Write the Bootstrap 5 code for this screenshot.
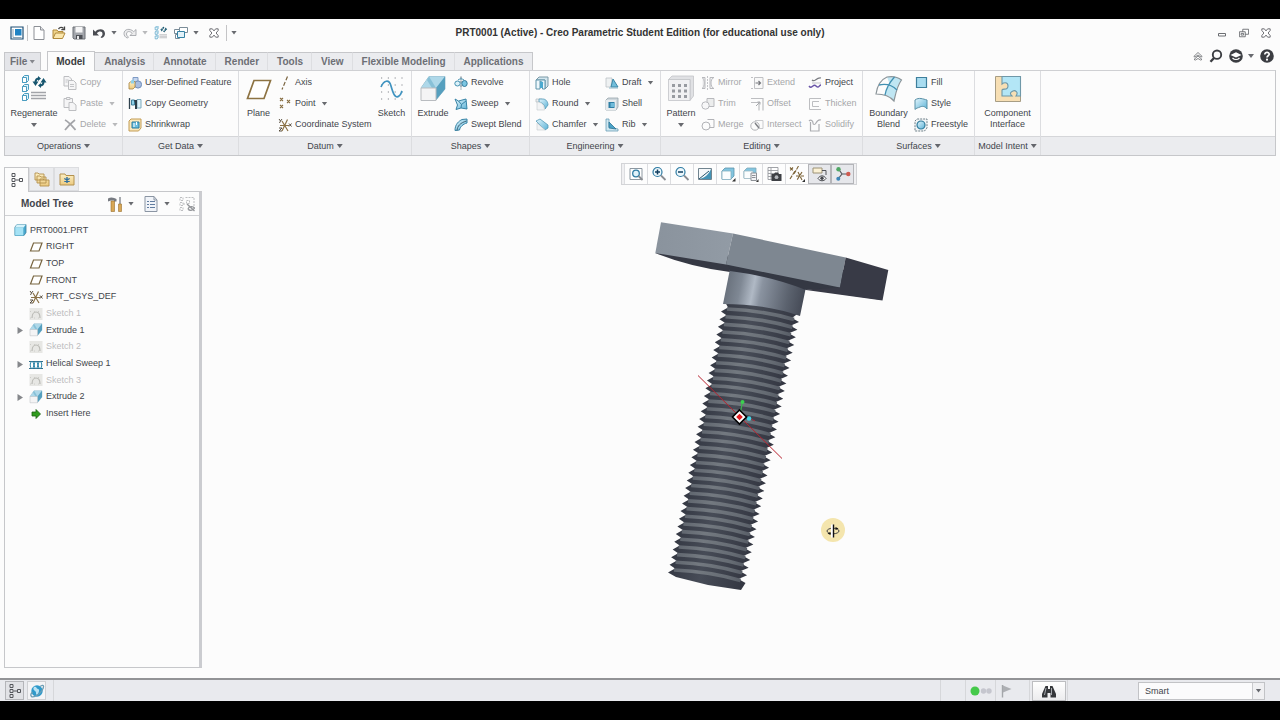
<!DOCTYPE html>
<html lang="en">
<head>
<meta charset="utf-8">
<meta name="viewport" content="width=device-width, initial-scale=1">
<title>PRT0001 (Active) - Creo Parametric Student Edition</title>
<link href="https://cdn.jsdelivr.net/npm/bootstrap@5.3.0/dist/css/bootstrap.min.css" rel="stylesheet">
<style>
  :root { --ink:#42454b; --dim:#a6a7aa; --line:#c6c7ca; --bar:#ebecef; --paper:#fcfcfc; }
  body { font:9px/11px "Liberation Sans", Arial, sans-serif; color:var(--ink); background:#000; padding:19px 0; height:100vh; }
  .app { background:var(--paper); overflow:hidden; }
  svg { display:block; flex:none; }
  .btn { --bs-btn-padding-x:0; --bs-btn-padding-y:0; --bs-btn-border-width:0; --bs-btn-border-radius:0; --bs-btn-color:var(--ink); --bs-btn-disabled-color:var(--dim); --bs-btn-disabled-opacity:1;
         --bs-btn-font-size:9px; --bs-btn-line-height:11px; display:flex; align-items:center; justify-content:center; white-space:nowrap; flex:none; }
  .caret { flex:none; width:6px; height:4px; background:currentColor; clip-path:polygon(0 0,100% 0,50% 100%); opacity:.8; }
  .drop-btn { gap:5px; }
  .i10 { width:10px; height:10px; } .i14 { width:14px; height:14px; } .i16 { width:16px; height:16px; } .i28 { width:28px; height:28px; }

  .titlebar { display:grid; grid-template-columns:1fr auto 1fr; align-items:center; height:27px; }
  .titlebar h1 { font-size:10px; line-height:12px; font-weight:700; margin:0; color:#333; }
  .quick { gap:6px; padding-left:10px; }
  .rule { width:1px; height:16px; margin:0 -2px 0 -3px; background:#c4c4c6; }
  .winctl { gap:12px; padding-right:9px; }

  .tabrow { height:24px; padding:0 6px 0 4px; }
  .tabrow .nav-link { font-size:10px; line-height:12px; font-weight:700; color:#6d6f75; padding:0 8px 0 9px; height:18px; border:0; border-top:1px solid var(--line); border-right:1px solid #dddee1; border-radius:0; background:var(--bar); }
  .tabrow .file { border:1px solid var(--line); border-bottom:0; background:#e4e5e9; padding:0 5px; margin-right:6px; display:flex; align-items:center; gap:2px; }
  .tabrow .nav-link.active { height:20px; margin-bottom:-1px; background:var(--paper); border:1px solid var(--line); border-bottom:0; color:#3a3c40; padding:0 9px 0 8px; position:relative; }
  .tabrow .nav-item:last-child .nav-link { border-right-color:var(--line); }
  .corner { gap:6px; }

  .ribbon { margin:0 4px; border:1px solid var(--line); border-top-color:#cfd0d3; height:86px; }
  .group { display:flex; flex-direction:column; border-right:1px solid #dcdde0; flex:none; }
  .group-body { display:grid; height:65px; padding-top:1px; }
  .group-name { height:19px; background:var(--bar); border-top:1px solid #d5d6d9; gap:3px; width:100%; }
  .spare { flex:1; }
  .g-ops { width:118px; } .g-ops .group-body { grid-template-columns:58px 1fr; }
  .g-get { width:116px; } .g-get .group-body { padding-left:5px; }
  .g-dat { width:173px; } .g-dat .group-body { grid-template-columns:39px 94px 1fr; }
  .g-sha { width:118px; } .g-sha .group-body { grid-template-columns:42px 1fr; }
  .g-eng { width:131px; } .g-eng .group-body { grid-template-columns:70px 1fr; padding-left:5px; }
  .g-edi { width:202px; } .g-edi .group-body { grid-template-columns:40px 49px 58px 1fr; }
  .g-sur { width:112px; } .g-sur .group-body { grid-template-columns:51px 1fr; }
  .g-mod { width:66px; }
  .cmd { height:21px; gap:3px; justify-content:flex-start; }
  .cmd .caret { margin-left:3px; }
  .big { flex-direction:column; justify-content:flex-start; padding-top:3px; white-space:normal; height:64px; }
  .big svg { margin-bottom:5px; }
  .big .caret { margin-top:4px; }

  .side { width:198px; margin:11px 0 10px 4px; flex:none; }
  .side-tabs .btn { width:25px; height:24px; background:var(--bar); border:1px solid #dcdde0; }
  .side-tabs .btn.active { height:25px; margin-bottom:-1px; background:var(--paper); border:1px solid var(--line); border-bottom:0; position:relative; }
  .panel { border:1px solid var(--line); border-right:3px solid #cbccd0; }
  .panel-head { height:24px; border-bottom:1px solid #d0d1d4; padding:0 4px 0 16px; }
  .panel-head h2 { font-size:10px; line-height:12px; font-weight:700; margin:0; }
  .panel-tools { gap:9px; }
  .tree { display:grid; grid-auto-rows:1fr; height:200px; margin:6px 0 0; padding:0 0 0 8px; list-style:none; }
  .tree li { display:flex; align-items:center; gap:3px; }
  .tree li.leaf { padding-left:16px; }
  .tree li.node { padding-left:3px; }
  .tree li.node .btn { width:8px; height:8px; margin-right:2px; }
  .tree li.off { color:#bdbdbf; }

  .viewbar { margin:7px 4px 0 0; height:22px; border:1px solid #d3d4d7; padding:0 2px; background:#f0f0f2; }
  .viewbar .btn { width:23px; height:20px; background:#fdfdfd; border-left:1px solid #dcdde0; }
  .viewbar .btn.active { background:#e6e7eb; border:1px solid #b4b5b9; }
  .work, .scene { min-height:0; }
  .scene svg { width:100%; height:100%; }

  .status { height:23px; background:#e9eaee; border-top:2px solid #929396; padding:0 15px 0 5px; overflow:hidden; flex:none; }
  .status > .cell { height:23px; border-right:1px solid #d6d7da; display:flex; align-items:center; flex:none; }
  .c-toggles { padding-right:7px; gap:3px; } .c-blank { width:25px; } .c-lamp { width:30px; } .c-flag { width:34px; } .c-find { width:38px; } .c-gap { width:70px; }
  .status .tog { width:19px; height:19px; border:1px solid #cfd0d3; background:#f4f4f6; }
  .status .tog.active { background:#e1e2e6; border-color:#b4b5b9; }
  .find { width:34px; height:20px; background:linear-gradient(#fff,#ececee); border:1px solid #bdbec1; }
  .filter { width:127px; height:18px; position:relative; }
  .filter select { appearance:none; width:100%; height:18px; border:1px solid #c2c3c6; background:#fbfbfc; border-radius:0; font:inherit; color:var(--ink); padding:1px 16px 0 6px; display:block; }
  .filter .drop { position:absolute; inset:1px 1px 1px auto; width:12px; border-left:1px solid #c9cacd; background:#f0f0f2; display:flex; align-items:center; justify-content:center; pointer-events:none; }
</style>
</head>
<body class="d-flex flex-column">

<svg width="0" height="0" class="position-absolute" aria-hidden="true">
  <defs>
    <linearGradient id="gBlue" x1="0" y1="0" x2="1" y2="1"><stop offset="0" stop-color="#e4f6fd"/><stop offset="1" stop-color="#5bb2d6"/></linearGradient>
    <linearGradient id="gGold" x1="0" y1="0" x2="0" y2="1"><stop offset="0" stop-color="#fdf0c4"/><stop offset="1" stop-color="#ecca80"/></linearGradient>
  </defs>
  <symbol id="app" viewBox="0 0 14 14"><path d="M1 1h12v12H1z" fill="#fff" stroke="#1f4f74" stroke-width="1.2"/><path d="M5 3h6.500v6.500H5z" fill="#1f83c4"/><path d="M3 3v8.500h8.500" fill="none" stroke="#8fa6b5"/></symbol>
  <symbol id="new" viewBox="0 0 14 14"><path d="M2 .5h6.500L12 4v9.500H2z" fill="#fff" stroke="#8d9096"/><path d="M8.500.5V4H12" fill="#e3e4e8" stroke="#8d9096"/></symbol>
  <symbol id="open" viewBox="0 0 14 14"><path d="M1 12V4h4l1 1.500h5V7" fill="#f0d48a" stroke="#b08a3c"/><path d="M1 12.500 3.500 7H13l-2.500 5.500z" fill="#fbe7ad" stroke="#b08a3c"/><path d="M6.500 3C8 1 10 1 11.500 2.500M12.500.5v3.200H9.300" fill="none" stroke="#444" stroke-width="1.300"/></symbol>
  <symbol id="save" viewBox="0 0 14 14"><path d="M1 1h12v12H2l-1-1z" fill="#a3a6ac" stroke="#6d7077"/><path d="M3.500 1h7v5.500h-7z" fill="#f6f6f7"/><path d="M4 9h6.500v4H4z" fill="#4d5056"/><path d="M5 10h2v3H5z" fill="#e8e8ea"/></symbol>
  <symbol id="undo" viewBox="0 0 14 14"><path d="M1 3.500v6h6L4.800 7.300C7 4.800 10.500 5 10.500 8c0 1.500-1 2.500-2 3.200l1.300.8C12 11 13 9.500 13 7.500 13 3 7 1.800 3.300 5.700z" fill="#4a4c52"/></symbol>
  <symbol id="redo" viewBox="0 0 14 14"><path d="M13 3.500v6H7l2.200-2.200C7 4.800 3.500 5 3.500 8c0 1.500 1 2.500 2 3.200l-1.300.8C2 11 1 9.500 1 7.500 1 3 7 1.800 10.700 5.700z" fill="#ededee" stroke="#9c9ea3" stroke-width=".8"/></symbol>
  <symbol id="regen" viewBox="0 0 28 28"><g stroke="#4b9dc0" fill="#dff3fa"><path d="M2.500 2.500 4.500.5h4v5l-2 2h-4zM2.500 11.500l2-2h4v5l-2 2h-4zM2.500 20.500l2-2h4v5l-2 2h-4z"/><path d="M2.500 2.500h4v5h-4zM2.500 11.500h4v5h-4zM2.500 20.500h4v5h-4z" fill="#fff"/></g><path d="M11 17.500h15M11 20.500h15M11 23.500h15" stroke="#a2a4a9" stroke-width="1.300"/><path d="M15.500 7.500C15.500 4.500 16.500 3.500 19 3.500M23.500 6.500c0 3-1 4-3.500 4" fill="none" stroke="#17566f" stroke-width="2"/><path d="M12.500 6.500h6l-3 4.500zM26.500 7.500h-6l3-4.500zM18 1v5l3-2.500zM21 8v5l-3-2.500z" fill="#17566f"/></symbol>
  <symbol id="wins" viewBox="0 0 14 14"><path d="M5.500 1.500h8v5h-8z" fill="#fff" stroke="#7a8c98"/><path d="M.5 3.500h5v4h-5zM1.500 8.500h4v4h-4z" fill="#fff" stroke="#7a8c98"/><path d="M3.500 5.500h7v6h-7z" fill="#e2f2f9" stroke="#3482a4"/></symbol>
  <symbol id="xbox" viewBox="0 0 12 12"><path d="M1 1h3l2 2.500L8 1h3v2L8.500 6 11 9v2H8L6 8.500 4 11H1V9l2.500-3L1 3z" fill="#fff" stroke="#54565b"/></symbol>
  <symbol id="min" viewBox="0 0 10 10"><path d="M1.500 5.500h7v2.500h-7z" fill="#fff" stroke="#6c6e72"/></symbol>
  <symbol id="rest" viewBox="0 0 12 12"><path d="M4.500 1.500h7v6h-7z" fill="#fff" stroke="#5f6166"/><path d="M.5 4.500h7v6h-7z" fill="#fff" stroke="#5f6166"/><path d="M2.500 6.500h3v2h-3z" fill="none" stroke="#5f6166"/></symbol>
  <symbol id="chev" viewBox="0 0 10 10"><path d="M.8 5.500 5 1.500l4.200 4L8 6 5 4 2 6zM1 8.500l4-3.500 4 3.500-1.500.5L5 7.500 2.500 9z" fill="#fff" stroke="#66686c" stroke-width=".8"/></symbol>
  <symbol id="search" viewBox="0 0 14 14"><circle cx="8" cy="5.700" r="4.200" fill="none" stroke="#3b3d42" stroke-width="1.900"/><path d="M5 9 1.500 12.700" stroke="#3b3d42" stroke-width="2.400"/></symbol>
  <symbol id="cap" viewBox="0 0 14 14"><circle cx="7" cy="7" r="6.800" fill="#3b3d42"/><path d="M1.500 6 7 3.300 12.500 6 7 8.500z" fill="#fff"/><path d="M3.500 9c2 2 5 2 7 0" fill="none" stroke="#fff" stroke-width="1.200"/></symbol>
  <symbol id="help" viewBox="0 0 14 14"><circle cx="7" cy="7" r="6.800" fill="#3b3d42"/><path d="M4.800 5.400C4.800 2.500 9.300 2.700 9.200 5.300 9.100 6.800 7 6.800 7 8.600" fill="none" stroke="#fff" stroke-width="1.700"/><circle cx="7" cy="10.700" r="1.100" fill="#fff"/></symbol>
  <symbol id="copy" viewBox="0 0 14 14"><g fill="#f5f5f6" stroke="#bdbec1"><path d="M1 .5h5L8.500 3v7H1z"/><path d="M5.500 4.500h5L13 7v6.500H5.500z"/></g><path d="M2.500 4h3M2.500 6h2M7 8.500h4M7 10.500h4" stroke="#c4c5c8"/></symbol>
  <symbol id="paste" viewBox="0 0 14 14"><g fill="#f5f5f6" stroke="#bdbec1"><path d="M1 1.500h8.500v9H1z"/><path d="M3.500.5h3.500v2H3.500z"/><path d="M6 5.500h4L13 8v5.500H6z"/></g></symbol>
  <symbol id="del" viewBox="0 0 14 14"><path d="M2 2c4 2 7 6 10.500 10M12 2C8 5 5 8 2 12" fill="none" stroke="#a3a4a8" stroke-width="1.700"/></symbol>
  <symbol id="udf" viewBox="0 0 14 14"><path d="M5 1.500h5v5H5z" fill="#c5d5ee" stroke="#7e9ac4"/><circle cx="10" cy="8.500" r="3.600" fill="#a7bde0" stroke="#6f8cb8"/><path d="M1 7l2-1.500h4V11L5 13H1z" fill="url(#gGold)" stroke="#a78443" stroke-width=".8"/><path d="M3 4.500 6 3.500v4H3z" fill="#8fd0e8"/></symbol>
  <symbol id="cgeo" viewBox="0 0 14 14"><path d="M1.500 1v11" stroke="#30424e" stroke-width="1.300"/><path d="M3.500 3h3v5h-3z" fill="#8fd0e8" stroke="#3f809c"/><path d="M9 2.500h4V11H9z" fill="#dff2f9" stroke="#7caabd"/><path d="M6 3h3v9H7V6z" fill="#2d3d49"/></symbol>
  <symbol id="shrink" viewBox="0 0 14 14"><path d="M1 3l2-2h10v9l-2.500 3H1z" fill="#f9e8bd" stroke="#c39c54"/><path d="M4 4h7v6H4z" fill="#6bbfe0" stroke="#2c7c9f"/><path d="M6 5v4M8.500 4v3" stroke="#fff"/></symbol>
  <symbol id="plane" viewBox="0 0 28 28"><path d="M9 5.500h16.500L19 23.500H2.500z" fill="#fff" stroke="#8d7343" stroke-width="1.700"/></symbol>
  <symbol id="axis" viewBox="0 0 14 14"><path d="M9.500.5 4 13.500" stroke="#7a6440" stroke-width="1.200" stroke-dasharray="4 2"/></symbol>
  <symbol id="pnt" viewBox="0 0 14 14"><path d="m2 1 3 3m0-3L2 4m7-1 3 3m0-3L9 6M2 8l3 3m0-3-3 3" stroke="#8a7146" stroke-width="1.100"/></symbol>
  <symbol id="csys" viewBox="0 0 14 14"><path d="m1 1 1.500 2L4 1M2.500 3 1.500 5M1 10h3l-3 3h3M11 5.500l2.500 3m0-3-2.500 3" fill="none" stroke="#4b4030" stroke-width=".9"/><path d="M2 7.500h9M4 3l6 10M9.500 1.500 4 13" stroke="#8a7146" stroke-width="1.200"/></symbol>
  <symbol id="sketch" viewBox="0 0 28 28"><path d="M3 3h24M3 10h24M3 17h24M3 24h24" stroke="#85888e" stroke-dasharray="1.200 5.600"/><path d="M3 12C6 5 11 4 13 11s4 13 8 10c2-1 2-3 3-5" fill="none" stroke="#3f93c0" stroke-width="1.700"/></symbol>
  <symbol id="extr" viewBox="0 0 28 28"><path d="M2 13 10 1.500h16V14l-9 11z" fill="#9bcbe0" stroke="#7fa9bc" stroke-width=".7"/><path d="M10 1.500h16L17 13H2z" fill="#aed8e9"/><path d="M17 13 26 1.500V14l-9 11z" fill="#559fbe"/><path d="m10 1.500 7 11.500h-4l-5-8z" fill="#6db0cb" opacity=".6"/><path d="M2 13h15v12.500H2z" fill="#f4f4f5" stroke="#b9bcc0"/></symbol>
  <symbol id="revo" viewBox="0 0 14 14"><path d="M7 .5v13" stroke="#576f7c" stroke-dasharray="3 1"/><ellipse cx="3.500" cy="7.500" rx="2.700" ry="2.500" fill="#dcf1f9" stroke="#4391b1"/><ellipse cx="10.500" cy="7.500" rx="2.700" ry="3" fill="#7cc6e2" stroke="#33799a"/><path d="M4 4c2-1.500 4-1.500 6 0" fill="none" stroke="#4391b1"/></symbol>
  <symbol id="sweep" viewBox="0 0 14 14"><path d="M1 2 4.500 4 12 2l1 10-6-1-5 1.500L3.500 8z" fill="url(#gBlue)" stroke="#3884a6"/><path d="m4.500 4 3 3.500L7 11m.5-3.500L12 4" fill="none" stroke="#3884a6"/></symbol>
  <symbol id="swbl" viewBox="0 0 14 14"><path d="M1 12.500C1 6 5 3 8 1.500l5-.5v4C9 6 6 9 5.500 12z" fill="url(#gBlue)" stroke="#3884a6"/><path d="M3 12.500C3.500 8 6 5 12.500 3" fill="none" stroke="#3b6478"/></symbol>
  <symbol id="hole" viewBox="0 0 14 14"><path d="M1 4l3-3h9v9l-3 3V4z" fill="#d3e6ee" stroke="#7c9aa7"/><path d="M1 4h9v9H7.500V6.500L5 5v8H1z" fill="#edf7fb" stroke="#5f94aa"/><path d="M5 6c2-1.500 4 0 3 2v4H5z" fill="#4ba9cf"/></symbol>
  <symbol id="rnd" viewBox="0 0 14 14"><path d="M1 2h6l-3 3H1z" fill="#eceef0" stroke="#b2babf" stroke-width=".7"/><path d="M4 2h4c3 0 5 3 5 6l-3 4C10 8 8 6 4 5z" fill="url(#gBlue)" stroke="#559ab7" stroke-width=".8"/><path d="M2 5c5 0 7 3 7.500 8H2z" fill="#f3f4f5" stroke="#c4cacd" stroke-width=".6"/></symbol>
  <symbol id="cham" viewBox="0 0 14 14"><path d="M1 3 5 1l8 6v3l-3 2-7-7z" fill="url(#gBlue)" stroke="#559ab7" stroke-width=".8"/><path d="m2 5 8 7H2z" fill="#f1f3f4" stroke="#c4cacd" stroke-width=".6"/></symbol>
  <symbol id="draft" viewBox="0 0 14 14"><path d="M1 2h6l-1 9H1z" fill="#eef1f2" stroke="#bcc3c7" stroke-width=".8"/><path d="M6 11 8 3l5 8z" fill="#72bedb" stroke="#3a86a6"/><path d="M4 12h9" stroke="#8bb6c8"/></symbol>
  <symbol id="shell" viewBox="0 0 14 14"><path d="M1 3l2-2h10v9l-2 3H1z" fill="#cfd7dc" stroke="#98a5ac" stroke-width=".8"/><path d="M1 3h10v10H1z" fill="#e6ebee"/><path d="M3.500 5h6v6h-6z" fill="#2f7fa5"/><path d="M5.500 6h4v4h-4z" fill="#6fbbda"/></symbol>
  <symbol id="rib" viewBox="0 0 14 14"><path d="M1 1h3v8l9 2v2H1z" fill="#cfe7f0" stroke="#6ba0b6" stroke-width=".8"/><path d="m4 4 7 7-7-1z" fill="#4ba3c8" stroke="#2d7595" stroke-width=".8"/></symbol>
  <symbol id="patt" viewBox="0 0 28 28"><path d="M1.500 4.500 5 1h21.500v20L23 25.500V4.500z" fill="#e0e1e4" stroke="#c3c4c8" stroke-width=".8"/><path d="M1.500 4.500H23v21H1.500z" fill="#f1f1f3" stroke="#c3c4c8" stroke-width=".8"/><path d="M5 10.500h15M5 16h15M5 21.500h15" stroke="#989ba1" stroke-width="3" stroke-dasharray="3 3"/></symbol>
  <symbol id="mirr" viewBox="0 0 14 14"><path d="M1 1.500c3 1 3 10 0 11M1 1.500h3v11H1M13 1.500c-4 1-4 10 0 11H9v-11z" fill="#f4f4f5" stroke="#b8b9bd"/><path d="M6.500 0v14" stroke="#c3c4c8" stroke-dasharray="2 1"/></symbol>
  <symbol id="trim" viewBox="0 0 14 14"><path d="M6 1.500h7v8H6z" fill="#eceded" stroke="#b8b9bd"/><circle cx="4.500" cy="8.500" r="3.700" fill="#f7f7f8" stroke="#b8b9bd"/></symbol>
  <symbol id="merge" viewBox="0 0 14 14"><path d="M6.500 1.500h6.500v8H8" fill="none" stroke="#b2b3b7"/><circle cx="5" cy="8" r="4" fill="none" stroke="#b2b3b7"/></symbol>
  <symbol id="extend" viewBox="0 0 14 14"><path d="M4.500 1.500H13v11H4.500zM1 1.500h2M1 12.500h2" fill="#f8f8f8" stroke="#c0c1c4"/><path d="M5.500 7H10M8.500 5l2 2-2 2" fill="none" stroke="#75777c" stroke-width="1.200"/></symbol>
  <symbol id="offs" viewBox="0 0 14 14"><path d="M1 1.500h12v12M1 5.500h8v8" fill="none" stroke="#bdbec1" stroke-width="1.200"/><path d="m6 9 4-4M7.500 5H10v2.500" fill="none" stroke="#a7a9ad"/></symbol>
  <symbol id="inter" viewBox="0 0 14 14"><path d="M5 2.500h8v8H9" fill="none" stroke="#c9cacd"/><circle cx="5" cy="8" r="4.200" fill="none" stroke="#b2b3b7"/><path d="m5 5 4 5" stroke="#7e8085" stroke-width="1.400"/></symbol>
  <symbol id="proj" viewBox="0 0 14 14"><path d="M4 4c3 3 4-3 9-2" fill="none" stroke="#797b80" stroke-width="1.200"/><path d="M4 7h9" stroke="#c4c5c8"/><path d="M1 10c3 4 4-3 7 0s3-1 5-1" fill="none" stroke="#6a55a8" stroke-width="1.500"/></symbol>
  <symbol id="thick" viewBox="0 0 14 14"><path d="M13 1.500H1.500v11H13M11 4.500H4.500v5H11" fill="none" stroke="#bdbec1"/></symbol>
  <symbol id="solid" viewBox="0 0 14 14"><path d="M2.500 4v9H11V6M1 3c2-2 4 0 4 2s2 2 3 0 2-4 5-3" fill="none" stroke="#acadb1" stroke-width="1.200"/></symbol>
  <symbol id="bound" viewBox="0 0 28 28"><path d="M12 2c5-1 10-.5 14.500 3C22 11 21 17 19 26c-3-4-5-5-9-6 1-6 3-8 5-10z" fill="#bfe6f3"/><path d="M12 2c5-1 10-.5 14.500 3C22 11 21 17 19 26 14 20 8 19 1 19 2 12 5 5 12 2z" fill="none" stroke="#8b9499" stroke-width="1.200"/><path d="M4 10c8-2 13 0 18 5M19.500 2C14 8 11 14 10 20" fill="none" stroke="#4190b2" stroke-width="1.300"/></symbol>
  <symbol id="fill" viewBox="0 0 14 14"><path d="M2.500 1.500h10v10h-10z" fill="#a8dcf0" stroke="#3e7f9c" stroke-width="1.200"/></symbol>
  <symbol id="style" viewBox="0 0 14 14"><path d="M1 3c4-3 8-1 12 0v9c-2-3-5-3-7-2s-4 1-5 2.500z" fill="url(#gBlue)" stroke="#5b91a7"/></symbol>
  <symbol id="free" viewBox="0 0 14 14"><path d="M1 3l2-2h10v9l-2.500 3H1z" fill="#f3f5f6" stroke="#6d7f88" stroke-dasharray="2 1"/><circle cx="7" cy="7" r="4" fill="url(#gBlue)" stroke="#2f7b9c" stroke-width="1.200"/></symbol>
  <symbol id="comp" viewBox="0 0 28 28"><path d="M1.500 1.500h25v25h-25z" fill="#f7dfb4" stroke="#a79d84"/><path d="M8 1.500h18.500V21H22c3-4-1-6-3-5s-4 2-1 5H8v-6c1-2 6 1 6-4s-5-3-6-2z" fill="#b3e6f6" stroke="#6f98a8" stroke-width="1.100"/></symbol>
  <symbol id="mtree" viewBox="0 0 16 16"><g fill="none" stroke="#55575c"><path d="M3 1.500h3v3H3zM3 6.500h3v3H3zM3 11.500h3v3H3zM10.500 6.500h3v3h-3zM6.500 8H10"/></g></symbol>
  <symbol id="folders" viewBox="0 0 16 16"><g fill="url(#gGold)" stroke="#b3914e" stroke-width=".9"><path d="M1 2h3l1 1h5v6H1zM3 5h3l1 1h5v6H3zM6 8h3l1 1h5v6H6z"/></g></symbol>
  <symbol id="fav" viewBox="0 0 16 16"><path d="M1 3h5l1 1.500h8V14H1z" fill="url(#gGold)" stroke="#b3914e"/><path d="M8 6v6M5.300 7.500l5.400 3M10.700 7.500l-5.400 3" stroke="#2f6f9f" stroke-width="1.400"/></symbol>
  <symbol id="tools" viewBox="0 0 16 16"><path d="M1 2.500C4 .5 7 1.500 9.500 3v2.500H7V4.500H4L1 5.500z" fill="#777b82"/><path d="M4 5h3.500v10.500H4z" fill="#d8a755" stroke="#98702c" stroke-width=".6"/><path d="M13 1v7" stroke="#8a8e95" stroke-width="1.500"/><path d="M11.500 8h3v7.500h-3z" fill="#d8a755" stroke="#98702c" stroke-width=".6"/></symbol>
  <symbol id="list" viewBox="0 0 16 16"><path d="M2 .5h9L14 4v11.500H2z" fill="#f1f4f9" stroke="#8b95a3"/><path d="M11 .5V4h3" fill="none" stroke="#8b95a3"/><path d="M4 5.500h2M7 5.500h5M4 8.500h2M7 8.500h5M4 11.500h2M7 11.500h5" stroke="#627da0" stroke-width="1.200"/></symbol>
  <symbol id="filt" viewBox="0 0 16 16"><path d="M1 1.500h3v3H1zM1 6.500h3v3H1zM1 11.500h3v3H1zM7.500 4.500h3v3h-3zM6.500 1.500h9M4 8h3M15 2v8" fill="none" stroke="#b6b7ba" stroke-width=".9" stroke-dasharray="2 1"/><path d="m8 8 7.500 7M9 13c1-3 5-3 6.500-1-2 3-5 3-6.500 1" fill="none" stroke="#939599" stroke-width="1.300"/></symbol>
  <symbol id="part" viewBox="0 0 14 14"><path d="M2 4l2-2.500h9v8L11 12.500H2z" fill="#49a9d0" stroke="#397d9c" stroke-width=".8"/><path d="M2 4.500h8.500v8H2z" fill="#a5e2f5" stroke="#5fb2d0" stroke-width=".6"/><path d="M4 1.500h9l-2.500 3H2z" fill="#d6f3fb"/></symbol>
  <symbol id="pln" viewBox="0 0 14 14"><path d="M4.500 3h8.500L10 11H1.500z" fill="#fff" stroke="#77643f" stroke-width="1.200"/></symbol>
  <symbol id="skoff" viewBox="0 0 14 14"><path d="M.5 1h13v12H.5z" fill="#e7e7e4"/><path d="M3 11c0-8 8-8 8 0" fill="none" stroke="#b9b9b4" stroke-width="1.200"/><path d="M1 4.500h12M1 11h12" stroke="#ccccc8" stroke-dasharray="1 3"/></symbol>
  <symbol id="helix" viewBox="0 0 14 14"><path d="M0 4.500h14M0 11.500h14" stroke="#356f8a"/><g fill="none" stroke="#2c86aa"><ellipse cx="3" cy="8" rx="1.800" ry="3.500"/><ellipse cx="7" cy="8" rx="1.800" ry="3.500"/><ellipse cx="11" cy="8" rx="1.800" ry="3.500"/></g></symbol>
  <symbol id="arrow" viewBox="0 0 14 14"><path d="M3 5h4V2.500L11.500 7 7 11.500V9H3z" fill="#2f9c1d" stroke="#1c5f12" stroke-width=".8"/></symbol>
  <symbol id="tri" viewBox="0 0 8 8"><path d="M1.500 1 7 4.500 1.500 8z" fill="#85878b"/></symbol>
  <symbol id="zfit" viewBox="0 0 16 16"><path d="M2 2.500h12v11H2z" fill="#fff" stroke="#8d98a1"/><circle cx="8" cy="7.500" r="3.300" fill="#e0f2fa" stroke="#2e7ba3" stroke-width="1.300"/><path d="m10.500 10 4 4" stroke="#8a8d92" stroke-width="1.800"/></symbol>
  <symbol id="zin" viewBox="0 0 16 16"><circle cx="6.500" cy="6" r="4.500" fill="#eef8fc" stroke="#2e7ba3" stroke-width="1.200"/><path d="M4 6h5M6.500 3.500v5" stroke="#123f60" stroke-width="1.500"/><path d="m10 9.500 4.500 4.500" stroke="#8a8d92" stroke-width="1.800"/></symbol>
  <symbol id="zout" viewBox="0 0 16 16"><circle cx="6.500" cy="6" r="4.500" fill="#eef8fc" stroke="#2e7ba3" stroke-width="1.200"/><path d="M4 6h5" stroke="#123f60" stroke-width="1.500"/><path d="m10 9.500 4.500 4.500" stroke="#8a8d92" stroke-width="1.800"/></symbol>
  <symbol id="repaint" viewBox="0 0 16 16"><path d="M1.500 2.500h13v11h-13z" fill="#f5f8fa" stroke="#71848f"/><path d="M14 3v10H2C8 12 12 8 14 3z" fill="#4393b5"/><path d="M2 13 12 5" stroke="#26556c"/></symbol>
  <symbol id="shade" viewBox="0 0 16 16"><path d="M2 5l3-3h9v8l-3 3H2z" fill="#81c5e0" stroke="#5d93a9" stroke-width=".8"/><path d="M2 5h9v8.500H2z" fill="#fbfdfe" stroke="#83aec0" stroke-width=".8"/><path d="M15.500 12v3.500H12z" fill="#333"/></symbol>
  <symbol id="saved" viewBox="0 0 16 16"><path d="M1 5l3-3h9v7l-3 3H1z" fill="#81c5e0" stroke="#82a7b6" stroke-width=".8"/><path d="M1 5h9v7.500H1z" fill="#fbfdfe" stroke="#9db9c4" stroke-width=".8"/><path d="M8 7h5.500v7.500H8z" fill="#f3f3f5" stroke="#8d9096"/><path d="M9 9.500h3.500M9 11.500h3.500" stroke="#8d9096"/><path d="M15.500 13v3H13z" fill="#333"/></symbol>
  <symbol id="cam" viewBox="0 0 16 16"><path d="M2 1.500h10v12H2zM2 4.500h10M2 7.500h10M2 10.500h10M5 2v11" fill="#fff" stroke="#96999e" stroke-width=".9"/><path d="M5.500 8H8l1-1.500h3L13 8h2.500v7h-10z" fill="#3d3f44"/><circle cx="10.500" cy="11.200" r="1.900" fill="#b3b6bb"/></symbol>
  <symbol id="datd" viewBox="0 0 16 16"><path d="m1 1.500 3 3m0-3-3 3M9.500 0 5 8M7 10H15M9 6l4 8M13 6l-5 8M1 13l5-8" stroke="#7c6337" stroke-width="1.100" stroke-dasharray="4 1"/><path d="M16 13v3h-3z" fill="#333"/></symbol>
  <symbol id="anno" viewBox="0 0 16 16"><path d="M1 2h9v5H1z" fill="#fbf1d5" stroke="#9c9277"/><path d="M10 4.500h4V9" fill="none" stroke="#54565b"/><path d="M6 12.500c2-3.500 6-3.500 8 0-2 3-6 3-8 0z" fill="#fff" stroke="#45474c"/><circle cx="10" cy="12.300" r="1.700" fill="#45474c"/></symbol>
  <symbol id="spin" viewBox="0 0 16 16"><path d="M3.500 3 7 8l-4 5M7 8h6" fill="none" stroke="#55575c" stroke-width="1.200"/><circle cx="3.500" cy="3.200" r="2.200" fill="#4fa765"/><circle cx="13.300" cy="8" r="2.200" fill="#cf5a50"/><circle cx="3.300" cy="12.800" r="2" fill="#3d86b8"/></symbol>
  <symbol id="globe" viewBox="0 0 16 16"><circle cx="8" cy="8" r="5.700" fill="#2f9acb"/><path d="M5 4c3-1 2 2 4 2s1 4-1 6c-2-1 0-3-2-4S4 5 5 4z" fill="#b9e2f3"/><path d="M11 3.500c4-3 4.500 0 2 4S4 15 2.500 13.500s0-3.500 1-4.500" fill="none" stroke="#6d9db4" stroke-width="1.300"/></symbol>
  <symbol id="flag" viewBox="0 0 14 14"><path d="M2.500 1v12.500" stroke="#a4a6aa" stroke-width="1.400"/><path d="M3 1.500 11.500 5 3 8.500z" fill="#adafb3"/></symbol>
  <symbol id="binoc" viewBox="0 0 16 16"><path d="M4.500 3h2.500v3h2V3h2.500l3.500 8v3.500H9.500V10h-3v4.500H1V11z" fill="#35373b"/><path d="M5 5 3.500 12M10.500 5v7" stroke="#a4a7ac"/></symbol>
</svg>

<div class="app d-flex flex-column flex-grow-1">
  <header>
    <div class="titlebar">
      <div class="quick d-flex align-items-center">
        <svg class="i14"><use href="#app"/></svg><span class="rule"></span>
        <button class="btn" aria-label="New"><svg class="i14"><use href="#new"/></svg></button>
        <button class="btn" aria-label="Open"><svg class="i14"><use href="#open"/></svg></button>
        <button class="btn" aria-label="Save"><svg class="i14"><use href="#save"/></svg></button>
        <button class="btn drop-btn" aria-label="Undo"><svg class="i14"><use href="#undo"/></svg><span class="caret"></span></button>
        <button class="btn drop-btn" aria-label="Redo" disabled><svg class="i14"><use href="#redo"/></svg><span class="caret"></span></button>
        <button class="btn" aria-label="Regenerate"><svg class="i14"><use href="#regen"/></svg></button>
        <button class="btn drop-btn" aria-label="Windows"><svg class="i14"><use href="#wins"/></svg><span class="caret"></span></button>
        <button class="btn px-1" aria-label="Close window"><svg class="i10"><use href="#xbox"/></svg></button>
        <span class="rule"></span>
        <button class="btn" aria-label="Customize toolbar"><span class="caret"></span></button>
      </div>
      <h1>PRT0001 (Active) - Creo Parametric Student Edition (for educational use only)</h1>
      <div class="winctl d-flex justify-content-end">
        <button class="btn" aria-label="Minimize"><svg class="i10"><use href="#min"/></svg></button>
        <button class="btn" aria-label="Restore"><svg class="i10"><use href="#rest"/></svg></button>
        <button class="btn" aria-label="Close"><svg class="i10"><use href="#xbox"/></svg></button>
      </div>
    </div>
    <div class="tabrow d-flex justify-content-between">
      <ul class="nav align-items-end flex-nowrap">
        <li class="nav-item"><button class="nav-link file">File <span class="caret"></span></button></li>
        <li class="nav-item"><button class="nav-link active">Model</button></li>
        <li class="nav-item"><button class="nav-link">Analysis</button></li>
        <li class="nav-item"><button class="nav-link">Annotate</button></li>
        <li class="nav-item"><button class="nav-link">Render</button></li>
        <li class="nav-item"><button class="nav-link">Tools</button></li>
        <li class="nav-item"><button class="nav-link">View</button></li>
        <li class="nav-item"><button class="nav-link">Flexible Modeling</button></li>
        <li class="nav-item"><button class="nav-link">Applications</button></li>
      </ul>
      <div class="corner d-flex align-items-center pb-1">
        <button class="btn" aria-label="Minimize ribbon"><svg class="i10"><use href="#chev"/></svg></button>
        <button class="btn" aria-label="Search"><svg class="i14"><use href="#search"/></svg></button>
        <button class="btn drop-btn" aria-label="Learning"><svg class="i14"><use href="#cap"/></svg><span class="caret"></span></button>
        <button class="btn" aria-label="Help"><svg class="i14"><use href="#help"/></svg></button>
      </div>
    </div>
    <div class="ribbon d-flex">
      <section class="group g-ops"><div class="group-body">
        <button class="btn big"><svg class="i28"><use href="#regen"/></svg>Regenerate<span class="caret"></span></button>
        <div><button class="btn cmd" disabled><svg class="i14"><use href="#copy"/></svg>Copy</button>
          <button class="btn cmd" disabled><svg class="i14"><use href="#paste"/></svg>Paste<span class="caret"></span></button>
          <button class="btn cmd" disabled><svg class="i14"><use href="#del"/></svg>Delete<span class="caret"></span></button></div>
      </div><button class="btn group-name">Operations<span class="caret"></span></button></section>
      <section class="group g-get"><div class="group-body">
        <div><button class="btn cmd"><svg class="i14"><use href="#udf"/></svg>User-Defined Feature</button>
          <button class="btn cmd"><svg class="i14"><use href="#cgeo"/></svg>Copy Geometry</button>
          <button class="btn cmd"><svg class="i14"><use href="#shrink"/></svg>Shrinkwrap</button></div>
      </div><button class="btn group-name">Get Data<span class="caret"></span></button></section>
      <section class="group g-dat"><div class="group-body">
        <button class="btn big"><svg class="i28"><use href="#plane"/></svg>Plane</button>
        <div><button class="btn cmd"><svg class="i14"><use href="#axis"/></svg>Axis</button>
          <button class="btn cmd"><svg class="i14"><use href="#pnt"/></svg>Point<span class="caret"></span></button>
          <button class="btn cmd"><svg class="i14"><use href="#csys"/></svg>Coordinate System</button></div>
        <button class="btn big"><svg class="i28"><use href="#sketch"/></svg>Sketch</button>
      </div><button class="btn group-name">Datum<span class="caret"></span></button></section>
      <section class="group g-sha"><div class="group-body">
        <button class="btn big"><svg class="i28"><use href="#extr"/></svg>Extrude</button>
        <div><button class="btn cmd"><svg class="i14"><use href="#revo"/></svg>Revolve</button>
          <button class="btn cmd"><svg class="i14"><use href="#sweep"/></svg>Sweep<span class="caret"></span></button>
          <button class="btn cmd"><svg class="i14"><use href="#swbl"/></svg>Swept Blend</button></div>
      </div><button class="btn group-name">Shapes<span class="caret"></span></button></section>
      <section class="group g-eng"><div class="group-body">
        <div><button class="btn cmd"><svg class="i14"><use href="#hole"/></svg>Hole</button>
          <button class="btn cmd"><svg class="i14"><use href="#rnd"/></svg>Round<span class="caret"></span></button>
          <button class="btn cmd"><svg class="i14"><use href="#cham"/></svg>Chamfer<span class="caret"></span></button></div>
        <div><button class="btn cmd"><svg class="i14"><use href="#draft"/></svg>Draft<span class="caret"></span></button>
          <button class="btn cmd"><svg class="i14"><use href="#shell"/></svg>Shell</button>
          <button class="btn cmd"><svg class="i14"><use href="#rib"/></svg>Rib<span class="caret"></span></button></div>
      </div><button class="btn group-name">Engineering<span class="caret"></span></button></section>
      <section class="group g-edi"><div class="group-body">
        <button class="btn big"><svg class="i28"><use href="#patt"/></svg>Pattern<span class="caret"></span></button>
        <div><button class="btn cmd" disabled><svg class="i14"><use href="#mirr"/></svg>Mirror</button>
          <button class="btn cmd" disabled><svg class="i14"><use href="#trim"/></svg>Trim</button>
          <button class="btn cmd" disabled><svg class="i14"><use href="#merge"/></svg>Merge</button></div>
        <div><button class="btn cmd" disabled><svg class="i14"><use href="#extend"/></svg>Extend</button>
          <button class="btn cmd" disabled><svg class="i14"><use href="#offs"/></svg>Offset</button>
          <button class="btn cmd" disabled><svg class="i14"><use href="#inter"/></svg>Intersect</button></div>
        <div><button class="btn cmd"><svg class="i14"><use href="#proj"/></svg>Project</button>
          <button class="btn cmd" disabled><svg class="i14"><use href="#thick"/></svg>Thicken</button>
          <button class="btn cmd" disabled><svg class="i14"><use href="#solid"/></svg>Solidify</button></div>
      </div><button class="btn group-name">Editing<span class="caret"></span></button></section>
      <section class="group g-sur"><div class="group-body">
        <button class="btn big"><svg class="i28"><use href="#bound"/></svg>Boundary Blend</button>
        <div><button class="btn cmd"><svg class="i14"><use href="#fill"/></svg>Fill</button>
          <button class="btn cmd"><svg class="i14"><use href="#style"/></svg>Style</button>
          <button class="btn cmd"><svg class="i14"><use href="#free"/></svg>Freestyle</button></div>
      </div><button class="btn group-name">Surfaces<span class="caret"></span></button></section>
      <section class="group g-mod"><div class="group-body">
        <button class="btn big"><svg class="i28"><use href="#comp"/></svg>Component Interface</button>
      </div><button class="btn group-name">Model Intent<span class="caret"></span></button></section>
      <div class="spare d-flex align-items-end"><div class="group-name"></div></div>
    </div>
  </header>

  <main class="work d-flex flex-grow-1">
    <aside class="side d-flex flex-column">
      <div class="side-tabs d-flex">
        <button class="btn active" aria-label="Model Tree"><svg class="i16"><use href="#mtree"/></svg></button>
        <button class="btn" aria-label="Folder Browser"><svg class="i16"><use href="#folders"/></svg></button>
        <button class="btn" aria-label="Favorites"><svg class="i16"><use href="#fav"/></svg></button>
      </div>
      <div class="panel flex-grow-1">
        <div class="panel-head d-flex align-items-center justify-content-between">
          <h2>Model Tree</h2>
          <div class="panel-tools d-flex align-items-center">
            <button class="btn drop-btn" aria-label="Settings"><svg class="i16"><use href="#tools"/></svg><span class="caret"></span></button>
            <button class="btn drop-btn" aria-label="Show"><svg class="i16"><use href="#list"/></svg><span class="caret"></span></button>
            <button class="btn" aria-label="Filter" disabled><svg class="i16"><use href="#filt"/></svg></button>
          </div>
        </div>
        <ul class="tree">
          <li><svg class="i14"><use href="#part"/></svg>PRT0001.PRT</li>
          <li class="leaf"><svg class="i14"><use href="#pln"/></svg>RIGHT</li>
          <li class="leaf"><svg class="i14"><use href="#pln"/></svg>TOP</li>
          <li class="leaf"><svg class="i14"><use href="#pln"/></svg>FRONT</li>
          <li class="leaf"><svg class="i14"><use href="#csys"/></svg>PRT_CSYS_DEF</li>
          <li class="leaf off"><svg class="i14"><use href="#skoff"/></svg>Sketch 1</li>
          <li class="node"><button class="btn" aria-label="Expand"><svg width="8" height="8"><use href="#tri"/></svg></button><svg class="i14"><use href="#extr"/></svg>Extrude 1</li>
          <li class="leaf off"><svg class="i14"><use href="#skoff"/></svg>Sketch 2</li>
          <li class="node"><button class="btn" aria-label="Expand"><svg width="8" height="8"><use href="#tri"/></svg></button><svg class="i14"><use href="#helix"/></svg>Helical Sweep 1</li>
          <li class="leaf off"><svg class="i14"><use href="#skoff"/></svg>Sketch 3</li>
          <li class="node"><button class="btn" aria-label="Expand"><svg width="8" height="8"><use href="#tri"/></svg></button><svg class="i14"><use href="#extr"/></svg>Extrude 2</li>
          <li class="leaf"><svg class="i14"><use href="#arrow"/></svg>Insert Here</li>
        </ul>
      </div>
    </aside>

    <section class="flex-grow-1 d-flex flex-column align-items-center">
      <div class="viewbar d-flex" role="toolbar" aria-label="Graphics">
        <button class="btn" aria-label="Refit"><svg class="i16"><use href="#zfit"/></svg></button>
        <button class="btn" aria-label="Zoom In"><svg class="i16"><use href="#zin"/></svg></button>
        <button class="btn" aria-label="Zoom Out"><svg class="i16"><use href="#zout"/></svg></button>
        <button class="btn" aria-label="Repaint"><svg class="i16"><use href="#repaint"/></svg></button>
        <button class="btn" aria-label="Display Style"><svg class="i16"><use href="#shade"/></svg></button>
        <button class="btn" aria-label="Saved Orientations"><svg class="i16"><use href="#saved"/></svg></button>
        <button class="btn" aria-label="View Manager"><svg class="i16"><use href="#cam"/></svg></button>
        <button class="btn" aria-label="Datum Display"><svg class="i16"><use href="#datd"/></svg></button>
        <button class="btn active" aria-label="Annotation Display"><svg class="i16"><use href="#anno"/></svg></button>
        <button class="btn active" aria-label="Spin Center"><svg class="i16"><use href="#spin"/></svg></button>
      </div>
      <div class="scene flex-grow-1 w-100">
        <svg viewBox="202 185 1078 493" role="img" aria-label="Bolt model">
          <defs>
            <linearGradient id="collar" gradientUnits="userSpaceOnUse" x1="724" y1="285" x2="804" y2="301"><stop offset="0" stop-color="#666e79"/><stop offset=".2" stop-color="#7f8894"/><stop offset=".36" stop-color="#b0b9c5"/><stop offset=".46" stop-color="#8a93a0"/><stop offset=".8" stop-color="#5b626e"/><stop offset="1" stop-color="#454a56"/></linearGradient>
            <linearGradient id="core" gradientUnits="userSpaceOnUse" x1="694" y1="440" x2="774" y2="456"><stop offset="0" stop-color="#343843"/><stop offset=".4" stop-color="#474c57"/><stop offset="1" stop-color="#323540"/></linearGradient>
            <linearGradient id="crest" gradientUnits="userSpaceOnUse" x1="694" y1="440" x2="774" y2="456"><stop offset="0" stop-color="#5c626b"/><stop offset=".35" stop-color="#737980"/><stop offset=".75" stop-color="#656b73"/><stop offset="1" stop-color="#50555f"/></linearGradient>
            <linearGradient id="faceL" x1="0" y1="0" x2="1" y2="0"><stop offset="0" stop-color="#8a939d"/><stop offset="1" stop-color="#929ba5"/></linearGradient>
          </defs>
          <path id="thread" fill="url(#core)"/>
          <path id="crests" fill="none" stroke="url(#crest)" stroke-width="3.600"/>
          <path d="M655 253Q690 267 730 272L806 289 882 300 845 270 726 255z" fill="#363944"/>
          <path d="M730 269Q765 274 806 287L800 316Q765 304 723 304z" fill="url(#collar)"/>
          <path d="M728 265 840 287 806 290Q770 276 730 271z" fill="#343843"/>
          <path d="M661 222.300 733 233.500 726 264.500 655.300 253z" fill="url(#faceL)"/>
          <path d="M733 233.500 845.700 257.500 840 287.500 726 264.500z" fill="#7e8791"/>
          <path d="M845.700 257.500 888.300 270 882.500 300.500 806 290 840 287.500z" fill="#383a46"/>
          <path d="M698 375.500 782 458.500" stroke="#b8222f"/>
          <path d="M740.500 412 742.500 402" stroke="#38b94a" stroke-width="1.200"/><circle cx="742.500" cy="402" r="2" fill="#3bd14f"/>
          <path d="m749 418 6 3" stroke="#a23240"/><circle cx="749" cy="418.500" r="2.300" fill="#42d5e6"/>
          <path d="m739.500 410 7 7-7 7-7-7z" fill="#fff" stroke="#000" stroke-width="1.600"/><path d="m739.500 413.800 3.300 3.200-3.300 3.200-3.300-3.200z" fill="#e41d22"/>
          <circle cx="833" cy="530" r="12" fill="#f4e5ad"/>
          <ellipse cx="833" cy="531" rx="6" ry="2.800" fill="none" stroke="#444"/><path d="M832 524.500v13" stroke="#fff" stroke-width="2"/><path d="M833.500 524.500v13" stroke="#111" stroke-width="1.400"/><path d="m835.500 527 3 1.500-3 1.500zM830.500 535l-3-1.500 3-1.500z" fill="#111"/>
        </svg>
      </div>
    </section>
  </main>

  <footer class="status d-flex align-items-center">
    <div class="cell c-toggles">
      <button class="btn tog active" aria-label="Model tree"><svg class="i16"><use href="#mtree"/></svg></button>
      <button class="btn tog" aria-label="Browser"><svg class="i16"><use href="#globe"/></svg></button>
    </div>
    <div class="cell flex-grow-1"></div>
    <div class="cell c-blank"></div>
    <div class="cell c-lamp justify-content-center"><svg width="22" height="10" viewBox="0 0 22 10"><circle cx="5" cy="5" r="4.500" fill="#45c94a"/><circle cx="13.500" cy="5" r="2.700" fill="#c5c6ce"/><circle cx="19" cy="5" r="2.700" fill="#c5c6ce"/></svg></div>
    <div class="cell c-flag ps-1"><svg class="i14"><use href="#flag"/></svg></div>
    <div class="cell c-find justify-content-center"><button class="btn find" aria-label="Find"><svg class="i16"><use href="#binoc"/></svg></button></div>
    <div class="c-gap flex-shrink-0"></div>
    <div class="filter flex-shrink-0">
      <select aria-label="Selection filter"><option>Smart</option></select>
      <span class="drop"><span class="caret"></span></span>
    </div>
  </footer>
</div>

<script src="https://cdn.jsdelivr.net/npm/bootstrap@5.3.0/dist/js/bootstrap.bundle.min.js"></script>
<script>
  // Helical thread: a zigzag outline down both flanks, with one lit crest per turn.
  const turns = 34, left = [], right = [], lit = [];
  for (let i = 0; i <= turns; i++) {
    const t = i / turns;
    const lx = 721 - 53 * t, ly = 311.5 + 261 * t, rx = 799 - 53.5 * t, ry = 322 + 261 * t;
    left.push([lx + 7, ly - 4], [lx, ly]);
    right.push([rx - 7, ry - 4], [rx, ry]);
    lit.push(`M${lx + 6} ${ly - 2.5}Q${lx + 42} ${ly - 1} ${rx - 5} ${ry - 2.5}`);
  }
  const outline = [[724, 300], ...left, [676, 577], [708, 585], [741, 590], ...right.reverse(), [800, 312]];
  document.getElementById('thread').setAttribute('d', 'M' + outline.map(p => p.join(' ')).join('L') + 'z');
  document.getElementById('crests').setAttribute('d', lit.join(''));
</script>
</body>
</html>
